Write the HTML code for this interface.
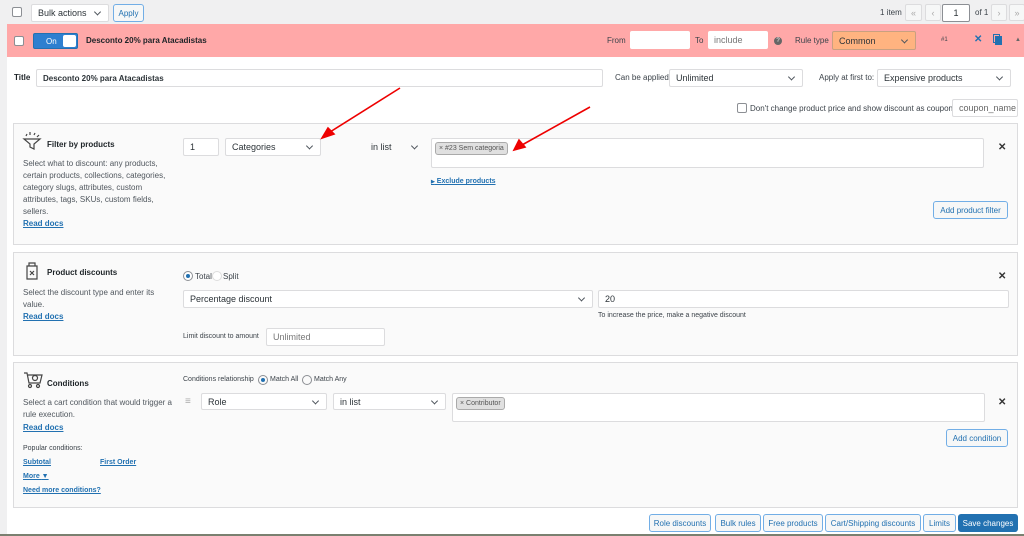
<!DOCTYPE html><html><head><style>
*{box-sizing:border-box}body{margin:0;width:1024px;height:536px;overflow:hidden;background:#f0f0f1;font-family:"Liberation Sans",sans-serif;font-size:8px;color:#3c434a;position:relative}
.a{position:absolute}
.in{position:absolute;background:#fff;border:1px solid #dcdcde;border-radius:2px;font-size:9px;padding:0 6px;display:flex;align-items:center;color:#2c3338}
.sel::after{content:"";position:absolute;right:8px;top:50%;width:4px;height:4px;border-right:1.3px solid #50575e;border-bottom:1.3px solid #50575e;transform:translateY(-70%) rotate(45deg)}
.box{position:absolute;left:13px;width:1005px;background:#fafafa;border:1px solid #dcdcde}
.btn{position:absolute;border:1px solid #72aee6;border-radius:3px;background:#f6f7f7;color:#2271b1;font-size:8px;display:flex;align-items:center;justify-content:center;height:18px}
.lnk{color:#2271b1;text-decoration:underline;font-weight:bold;font-size:8px}
.h{font-weight:bold;font-size:8px;color:#1d2327}
.cb{position:absolute;width:10px;height:10px;border:1px solid #8c8f94;border-radius:2px;background:#fff}
.x{position:absolute;font-size:10px;font-weight:bold;color:#333}
.tag{position:absolute;background:#e0e0e0;border:1px solid #aaa;border-radius:3px;font-size:7px;padding:2px 3px;color:#555}
.d{font-size:8px;line-height:12px;color:#50575e}
</style></head><body>
<div class="cb" style="left:12px;top:7px"></div>
<div class="in sel" style="left:31px;top:4px;width:78px;height:18px">Bulk actions</div>
<div class="btn" style="left:113px;top:4px;width:31px">Apply</div>
<div class="a" style="left:880px;top:8px;font-size:8px">1 item</div>
<div class="in" style="left:905px;top:4px;width:17px;height:17px;background:#f6f7f7;color:#aaa;justify-content:center">«</div>
<div class="in" style="left:925px;top:4px;width:16px;height:17px;background:#f6f7f7;color:#aaa;justify-content:center">‹</div>
<div class="in" style="left:942px;top:4px;width:28px;height:18px;border-color:#8c8f94;justify-content:center">1</div>
<div class="a" style="left:975px;top:8px">of 1</div>
<div class="in" style="left:991px;top:4px;width:16px;height:17px;background:#f6f7f7;color:#aaa;justify-content:center">›</div>
<div class="in" style="left:1009px;top:4px;width:16px;height:17px;background:#f6f7f7;color:#aaa;justify-content:center">»</div>

<div class="a" style="left:7px;top:24px;width:1017px;height:512px;background:#fff"></div>
<div class="a" style="left:7px;top:24px;width:1017px;height:33px;background:#ffa8a8"></div>
<div class="cb" style="left:14px;top:36px"></div>
<div class="a" style="left:33px;top:33px;width:45px;height:16px;background:#2e7fd0;border:1px solid #2271b1;border-radius:2px;color:#fff;font-size:8px;padding:3px 0 0 12px">On<div class="a" style="right:1px;top:1px;width:13px;height:12px;background:#fff;border-radius:2px"></div></div>
<div class="a h" style="left:86px;top:36px;font-size:8px">Desconto 20% para Atacadistas</div>
<div class="a" style="left:607px;top:36px">From</div>
<div class="in" style="left:630px;top:31px;width:60px;height:18px;border:0"></div>
<div class="a" style="left:695px;top:36px">To</div>
<div class="in" style="left:708px;top:31px;width:60px;height:18px;border:0;color:#777">include</div>
<div class="a" style="left:774px;top:37px;width:8px;height:8px;border-radius:50%;background:#666;color:#fff;font-size:6px;text-align:center;line-height:8px">?</div>
<div class="a" style="left:795px;top:36px">Rule type</div>
<div class="in sel" style="left:832px;top:31px;width:84px;height:19px;background:#ffb380;border-color:#c9a080">Common</div>
<div class="a" style="left:941px;top:37px;font-size:6px">#1</div>
<div class="a" style="left:974px;top:34px;color:#2271b1;font-size:10px;font-weight:bold">✕</div>
<div class="a" style="left:995px;top:36px;width:7px;height:9px;background:#2271b1"></div><div class="a" style="left:993px;top:34px;width:7px;height:9px;border:1px solid #2271b1"></div>
<div class="a" style="left:1015px;top:37px;font-size:6px;color:#666">▲</div>

<div class="a h" style="left:14px;top:73px">Title</div>
<div class="in" style="left:36px;top:69px;width:567px;height:18px;font-weight:bold;font-size:8px">Desconto 20% para Atacadistas</div>
<div class="a" style="left:615px;top:73px">Can be applied</div>
<div class="in sel" style="left:669px;top:69px;width:134px;height:18px">Unlimited</div>
<div class="a" style="left:819px;top:73px">Apply at first to:</div>
<div class="in sel" style="left:877px;top:69px;width:134px;height:18px">Expensive products</div>
<div class="cb" style="left:737px;top:103px"></div>
<div class="a" style="left:750px;top:104px">Don't change product price and show discount as coupon</div>
<div class="in" style="left:952px;top:99px;width:66px;height:18px;color:#666">coupon_name</div>

<div class="box" style="top:123px;height:122px"></div>
<svg class="a" style="left:22px;top:131px" width="20" height="20" fill="none" stroke="#444" stroke-width="1.2"><path d="M2 8h16l-6 5v5l-4-2v-3z"/><path d="M4 5l1-2M8 4l0-3M12 4l1-2M15 6l2-2"/></svg>
<div class="a h" style="left:47px;top:140px">Filter by products</div>
<div class="a d" style="left:23px;top:158px;width:145px">Select what to discount: any products, certain products, collections, categories, category slugs, attributes, custom attributes, tags, SKUs, custom fields, sellers.</div>
<div class="a lnk" style="left:23px;top:219px">Read docs</div>
<div class="in" style="left:183px;top:138px;width:36px;height:18px">1</div>
<div class="in sel" style="left:225px;top:138px;width:96px;height:18px">Categories</div>
<div class="in sel" style="left:365px;top:138px;width:60px;height:18px;border:0;background:transparent">in list</div>
<div class="in" style="left:431px;top:138px;width:553px;height:30px"></div>
<div class="tag" style="left:435px;top:142px">× #23 Sem categoria</div>
<div class="a lnk" style="left:431px;top:178px;font-size:7px"><span style="font-size:5px;text-decoration:none">▶</span> Exclude products</div>
<div class="x" style="left:998px;top:142px">✕</div>
<div class="btn" style="left:933px;top:201px;width:75px">Add product filter</div>
<svg class="a" style="left:0;top:0" width="1024" height="536"><g stroke="#e00" stroke-width="1.6" fill="#e00"><line x1="400" y1="88" x2="330" y2="132"/><polygon points="322,138 328,128 334,134"/><line x1="590" y1="107" x2="522" y2="145"/><polygon points="514,150 519,140 525,147"/></g></svg>

<div class="box" style="top:252px;height:104px"></div>
<svg class="a" style="left:24px;top:262px" width="16" height="18" fill="none" stroke="#444" stroke-width="1.2"><path d="M5 1h6v3H5zM3 4h10v13H3z"/><path d="M6 9l4 4M6 13l4-4"/></svg>
<div class="a h" style="left:47px;top:268px">Product discounts</div>
<div class="a d" style="left:23px;top:287px;width:140px">Select the discount type and enter its value.</div>
<div class="a lnk" style="left:23px;top:312px">Read docs</div>
<div class="a" style="left:183px;top:271px;width:10px;height:10px;border-radius:50%;border:1px solid #8c8f94;background:#fff"><div class="a" style="left:2px;top:2px;width:4px;height:4px;border-radius:50%;background:#2271b1"></div></div>
<div class="a" style="left:195px;top:272px">Total</div>
<div class="a" style="left:212px;top:271px;width:10px;height:10px;border-radius:50%;border:1px solid #ddd;background:#fff"></div>
<div class="a" style="left:223px;top:272px">Split</div>
<div class="in sel" style="left:183px;top:290px;width:410px;height:18px">Percentage discount</div>
<div class="in" style="left:598px;top:290px;width:411px;height:18px">20</div>
<div class="a" style="left:598px;top:312px;font-size:7px">To increase the price, make a negative discount</div>
<div class="a" style="left:183px;top:333px;font-size:7px">Limit discount to amount</div>
<div class="in" style="left:266px;top:328px;width:119px;height:18px;color:#777">Unlimited</div>
<div class="x" style="left:998px;top:271px">✕</div>

<div class="box" style="top:362px;height:146px"></div>
<svg class="a" style="left:23px;top:371px" width="20" height="18" fill="none" stroke="#444" stroke-width="1.2"><path d="M1 2h3l2 10h11l2-8H5"/><circle cx="7" cy="15" r="1.5"/><circle cx="15" cy="15" r="1.5"/><circle cx="12" cy="7" r="2.5"/></svg>
<div class="a h" style="left:47px;top:379px">Conditions</div>
<div class="a d" style="left:23px;top:397px;width:155px">Select a cart condition that would trigger a rule execution.</div>
<div class="a lnk" style="left:23px;top:423px">Read docs</div>
<div class="a" style="left:23px;top:445px;font-size:7px">Popular conditions:</div>
<div class="a lnk" style="left:23px;top:459px;font-size:7px">Subtotal</div>
<div class="a lnk" style="left:100px;top:459px;font-size:7px">First Order</div>
<div class="a lnk" style="left:23px;top:473px;font-size:7px">More <span style="text-decoration:none">▼</span></div>
<div class="a lnk" style="left:23px;top:487px;font-size:7px">Need more conditions?</div>
<div class="a" style="left:183px;top:376px;font-size:7px">Conditions relationship</div>
<div class="a" style="left:258px;top:375px;width:10px;height:10px;border-radius:50%;border:1px solid #8c8f94"><div class="a" style="left:2px;top:2px;width:4px;height:4px;border-radius:50%;background:#2271b1"></div></div>
<div class="a" style="left:270px;top:376px;font-size:7px">Match All</div>
<div class="a" style="left:302px;top:375px;width:10px;height:10px;border-radius:50%;border:1px solid #8c8f94"></div>
<div class="a" style="left:314px;top:376px;font-size:7px">Match Any</div>
<div class="a" style="left:185px;top:396px;color:#aaa;font-size:10px">≡</div>
<div class="in sel" style="left:201px;top:393px;width:126px;height:17px">Role</div>
<div class="in sel" style="left:333px;top:393px;width:113px;height:17px">in list</div>
<div class="in" style="left:452px;top:393px;width:533px;height:29px"></div>
<div class="tag" style="left:456px;top:397px">× Contributor</div>
<div class="x" style="left:998px;top:397px">✕</div>
<div class="btn" style="left:946px;top:429px;width:62px">Add condition</div>

<div class="btn" style="left:649px;top:514px;width:62px">Role discounts</div>
<div class="btn" style="left:715px;top:514px;width:46px">Bulk rules</div>
<div class="btn" style="left:763px;top:514px;width:60px">Free products</div>
<div class="btn" style="left:825px;top:514px;width:96px">Cart/Shipping discounts</div>
<div class="btn" style="left:923px;top:514px;width:33px">Limits</div>
<div class="btn" style="left:958px;top:514px;width:60px;background:#2271b1;color:#fff;border-color:#2271b1">Save changes</div>
<div class="a" style="left:0;top:534px;width:1024px;height:2px;background:#7a8070"></div>
</body></html>
